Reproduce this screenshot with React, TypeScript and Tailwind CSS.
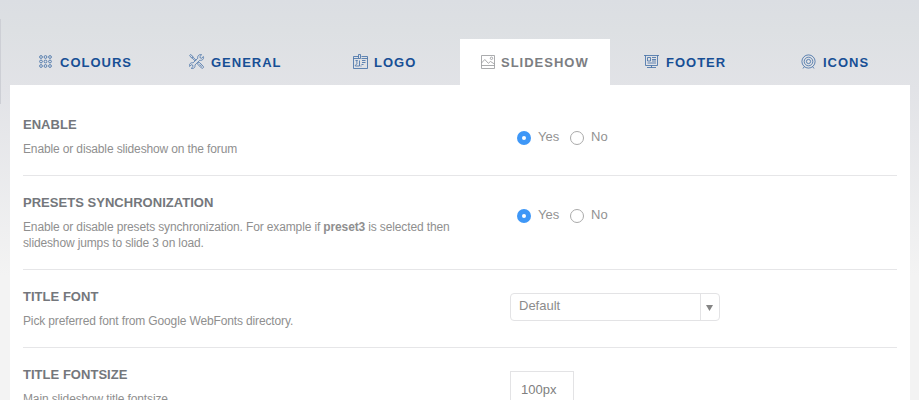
import type { ReactNode } from "react";

function Glyph({ box = "0 0 16 16", children }: { box?: string; children: ReactNode }) {
  return (
    <svg width="16" height="16" viewBox={box} fill="none" stroke="currentColor" strokeWidth="0.8" className="shrink-0 opacity-80">
      {children}
    </svg>
  );
}

const GridGlyph = () => (
  <Glyph>
    {[3, 7.5, 12].map((y) => [3, 7.5, 12].map((x) => <circle key={`${x}-${y}`} cx={x} cy={y} r="1.4" />))}
  </Glyph>
);

const ToolsGlyph = () => (
  <Glyph box="0 0 17 17">
    <path d="M.6 1.5 1.5.6l2.300 1.500.4 1.200 3.300 3.300M3.300 4.200 6.600 7.500M.8 1.600l1.400 2.200 1.100.4.9-.9" />
    <path d="M9.300 9.600l.8-.8 1.300.4 3.600 3.700c.6.7.5 1.400 0 1.900s-1.200.6-1.900 0L9.500 11.200z M11.200 11l2.500 2.500" />
    <path d="M13.400.8 11.600 2.600l.3 1.600 1.500.3 1.900-1.800c.4 1.500 0 2.600-.8 3.300-.9.800-2.100.9-3.100.6L6.300 11.700c.3 1.100 0 2.200-.8 3-.8.700-1.900.9-3.100.5l1.900-1.900-.4-1.500-1.500-.4-1.800 1.800c-.4-1.200-.1-2.300.7-3.100.8-.8 1.900-1 3-.7L9.300 4.500C9 3.400 9.300 2.300 10.100 1.500c.9-.8 2-1.100 3.300-.7z" />
  </Glyph>
);

const BadgeGlyph = () => (
  <Glyph>
    <path d="M6.500 2.500h-5v12h14v-12h-6M1.500 4.500h5M9.500 4.500h6M6.500.5h2v4h-2z" />
    <path d="M3.500 6.500H5M6 6.500c-1 0-1.300.8-1.200 1.700.4 1.300.2 2-.6 2.300-.8.300-.9.800-.9 1.500h4.200v-5.500M8.500 12h1M10 6.500h3.500M10 8.500h3.500M9.500 10.500h2" />
  </Glyph>
);

const PictureGlyph = () => (
  <Glyph>
    <path d="M1.500 1.500h13v13h-13zM1.500 11.500h13M1.500 9l3.300-3.500 3.500 3.800L10.500 7.500l4 2.500" />
    <circle cx="11.500" cy="4.300" r="1.200" />
  </Glyph>
);

const BoardGlyph = () => (
  <Glyph>
    <path d="M0 1.500h15M1.500 1.500v10h12v-10M3.500 3.500h3v3.500h-3zM8 3.500h4M8 5.500h4M8 7h4M3.500 9h8.500M7.500 11.500v2M3 13.500h9" />
  </Glyph>
);

const TargetGlyph = () => (
  <Glyph>
    <circle cx="7.500" cy="7.500" r="6.600" />
    <circle cx="7.500" cy="7.500" r="4.300" />
    <circle cx="7.500" cy="7.500" r="2.100" />
    <path d="M3.200 12.800 2 14.500M11.800 12.800l1.200 1.700" />
  </Glyph>
);

type TabProps = { label: string; icon: ReactNode; active?: boolean; pad: string };

function Tab({ label, icon, active, pad }: TabProps) {
  return (
    <button
      className={`flex h-[46px] w-[150px] shrink-0 items-center ${pad} text-[13px] leading-4 font-bold tracking-[1px] ${
        active ? "gap-[5px] bg-white text-[#7c7e82]" : "gap-[6px] text-[#174f95]"
      }`}
    >
      {icon}
      <span className="mt-[2px]">{label}</span>
    </button>
  );
}

function Row({ title, desc, children }: { title: string; desc: ReactNode; children: ReactNode }) {
  return (
    <section className="flex border-b border-[#e6e6e8]">
      <div className="w-[487px] shrink-0 pt-[19px] pb-[18px]">
        <h3 className="text-[13px] leading-4 font-bold tracking-[0.03px] text-[#74777c]">{title}</h3>
        <div className="mt-2 text-[12px] leading-4 tracking-[-0.135px] whitespace-nowrap text-[#8f8f8f]">{desc}</div>
      </div>
      <div className="pt-[23px]">{children}</div>
    </section>
  );
}

function YesNo() {
  return (
    <div className="flex pt-2 pl-[7px] text-[13px] leading-4 text-[#929292]">
      <span className="mt-0.5 flex size-3.5 items-center justify-center rounded-full bg-[#3e97f7]">
        <span className="size-1 rounded-full bg-white" />
      </span>
      <span className="ml-[7px] w-[25px]">Yes</span>
      <span className="mt-0.5 ml-[7px] size-3.5 rounded-full border border-[#aaaaaa] bg-white" />
      <span className="ml-[7px]">No</span>
    </div>
  );
}

export default function App() {
  return (
    <div className="flex h-[400px] w-[919px] overflow-hidden bg-[linear-gradient(180deg,#dbdee3_0px,#dde0e3_30px,#e2e3e7_90px,#f3f3f3_275px)] font-['Liberation_Sans',Arial,sans-serif]">
      <div className="mt-[19px] h-[85px] w-px bg-[#cdcfd5]" />
      <div className="ml-[9px] w-[900px] shrink-0 pt-[39px]">
        <nav className="flex">
          <Tab label="COLOURS" icon={<GridGlyph />} pad="pl-[28px]" />
          <Tab label="GENERAL" icon={<ToolsGlyph />} pad="pl-[29px]" />
          <Tab label="LOGO" icon={<BadgeGlyph />} pad="pl-[42px]" />
          <Tab label="SLIDESHOW" icon={<PictureGlyph />} pad="pl-[20px]" active />
          <Tab label="FOOTER" icon={<BoardGlyph />} pad="pl-[34px]" />
          <Tab label="ICONS" icon={<TargetGlyph />} pad="pl-[41px]" />
        </nav>
        <main className="h-[340px] bg-white px-[13px] pt-[13px]">
          <Row title="ENABLE" desc="Enable or disable slideshow on the forum">
            <YesNo />
          </Row>
          <Row
            title="PRESETS SYNCHRONIZATION"
            desc={
              <>
                Enable or disable presets synchronization. For example if <b>preset3</b> is selected then
                <br />
                slideshow jumps to slide 3 on load.
              </>
            }
          >
            <YesNo />
          </Row>
          <Row title="TITLE FONT" desc="Pick preferred font from Google WebFonts directory.">
            <div className="flex h-7 w-[210px] rounded border border-[#e3e3e5] text-[13px] text-[#8c8c8c]">
              <span className="grow pt-[4px] pl-2 leading-4">Default</span>
              <span className="flex w-[19px] items-center border-l border-[#e3e3e5] pl-[5px]">
                <svg width="7" height="6" viewBox="0 0 7 6" className="mt-[2px]">
                  <path d="M0 0h7L3.500 6z" fill="#858585" />
                </svg>
              </span>
            </div>
          </Row>
          <Row title="TITLE FONTSIZE" desc="Main slideshow title fontsize.">
            <div className="h-[38px] w-16 border border-[#e3e3e5] pt-[10px] pl-2.5 text-[13px] leading-4 text-[#808080]">100px</div>
          </Row>
        </main>
      </div>
    </div>
  );
}
